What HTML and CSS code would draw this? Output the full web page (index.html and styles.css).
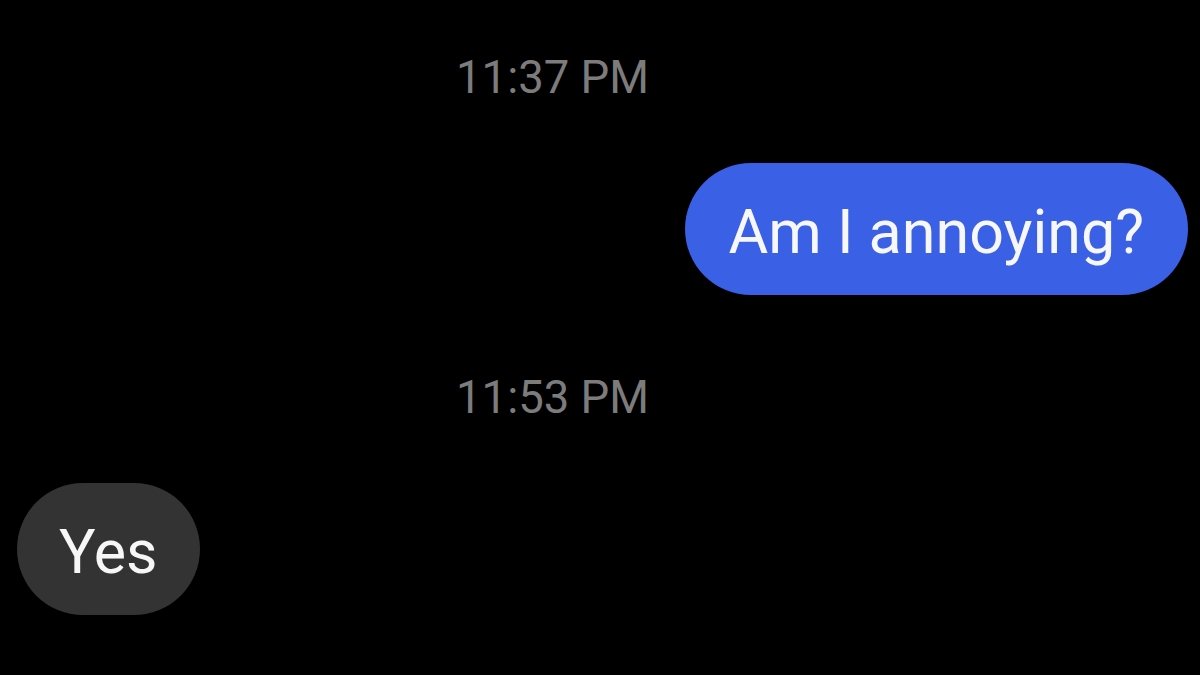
FILE: index.html
```html
<!DOCTYPE html>
<html lang="en">
<head>
<meta charset="utf-8">
<title>Messages</title>
<link rel="stylesheet" href="styles.css">
</head>
<body>
<main class="thread">
  <div class="stamp">11:37 PM</div>
  <div class="row row-out">
    <div class="bubble bubble-out">Am I annoying?</div>
  </div>
  <div class="stamp stamp-2">11:53 PM</div>
  <div class="row row-in">
    <div class="bubble bubble-in">Yes</div>
  </div>
</main>
</body>
</html>
```
FILE: styles.css
```css
html, body {
  margin: 0;
  padding: 0;
  background: #000;
}
body {
  width: 1200px;
  height: 675px;
  overflow: hidden;
  font-family: Roboto, "Noto Sans", sans-serif;
}
.thread {
  display: flex;
  flex-direction: column;
  padding: 55px 12px 0 17px;
}
.stamp {
  font-size: 45.5px;
  line-height: 45px;
  color: #7c7c7c;
  text-align: center;
  padding-right: 100px;
}
.stamp-2 {
  margin-top: 80px;
}
.row {
  display: flex;
  margin-top: 63px;
}
.row-out {
  justify-content: flex-end;
}
.row-in {
  justify-content: flex-start;
}
.bubble {
  display: flex;
  align-items: center;
  box-sizing: border-box;
  height: 132px;
  padding: 6px 44px 0 43px;
  border-radius: 66px;
  font-size: 61px;
  line-height: 61px;
  color: #f7f7f7;
  white-space: nowrap;
}
.bubble-out {
  background: #3a60e6;
}
.bubble-in {
  background: #333333;
  padding: 6px 42px 0 42px;
}
```
